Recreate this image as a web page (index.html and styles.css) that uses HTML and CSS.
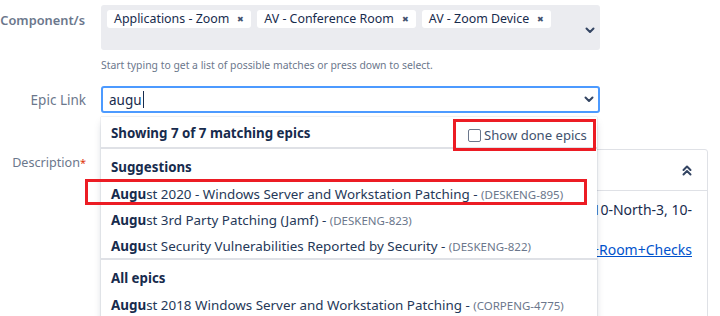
FILE: index.html
```html
<!DOCTYPE html>
<html lang="en">
<head>
    <meta charset="UTF-8">
    <meta name="viewport" content="width=device-width, initial-scale=1.0">
    <title>Edit Issue</title>
    <link rel="stylesheet" href="styles.css">
</head>
<body>
    <div class="form">
        <div class="row row-components">
            <label class="label label-strong">Component/s</label>
            <div class="field">
                <div class="multi">
                    <div class="tags">
                        <span class="tag">Applications - Zoom <span class="tag-x">&#x2716;</span></span>
                        <span class="tag">AV - Conference Room <span class="tag-x">&#x2716;</span></span>
                        <span class="tag">AV - Zoom Device <span class="tag-x">&#x2716;</span></span>
                    </div>
                    <svg class="chevron" width="10" height="7" viewBox="0 0 10 7">
                        <path d="M1.5 1.5 L5 5 L8.5 1.5" fill="none" stroke="#344563" stroke-width="2" stroke-linecap="round" stroke-linejoin="round"/>
                    </svg>
                </div>
                <div class="help">Start typing to get a list of possible matches or press down to select.</div>
            </div>
        </div>

        <div class="row row-epic">
            <label class="label">Epic Link</label>
            <div class="field picker">
                <div class="input">
                    <span class="typed">augu</span><span class="caret"></span>
                    <svg class="chevron" width="10" height="7" viewBox="0 0 10 7">
                        <path d="M1.5 1.5 L5 5 L8.5 1.5" fill="none" stroke="#344563" stroke-width="2" stroke-linecap="round" stroke-linejoin="round"/>
                    </svg>
                </div>

                <div class="dropdown">
                    <div class="dd-header">
                        <span class="dd-count">Showing 7 of 7 matching epics</span>
                        <label class="done-toggle">
                            <span class="checkbox"></span>Show done epics
                        </label>
                    </div>
                    <div class="group">
                        <div class="group-title">Suggestions</div>
                        <div class="item">
                            <b>Augu</b>st 2020 - Windows Server and Workstation Patching - <span class="key">(DESKENG-895)</span>
                            <span class="mark-box"></span>
                        </div>
                        <div class="item"><b>Augu</b>st 3rd Party Patching (Jamf) - <span class="key">(DESKENG-823)</span></div>
                        <div class="item"><b>Augu</b>st Security Vulnerabilities Reported by Security - <span class="key">(DESKENG-822)</span></div>
                    </div>
                    <div class="group">
                        <div class="group-title">All epics</div>
                        <div class="item"><b>Augu</b>st 2018 Windows Server and Workstation Patching - <span class="key">(CORPENG-4775)</span></div>
                    </div>
                </div>
            </div>
        </div>

        <div class="row row-description">
            <label class="label label-desc">Description<span class="req">*</span></label>
            <div class="field">
                <div class="editor">
                    <div class="toolbar">
                        <svg class="collapse" width="10" height="11" viewBox="0 0 10 11">
                            <path d="M1.5 5 L5 1.5 L8.5 5 M1.5 9.5 L5 6 L8.5 9.5" fill="none" stroke="#344563" stroke-width="2" stroke-linecap="round" stroke-linejoin="round"/>
                        </svg>
                    </div>
                    <div class="editor-body">
                        <p class="line line-right">Rooms: 10-North-1, 10-North-2, 10-North-3, 10-</p>
                        <p class="line">North-4</p>
                        <p class="line line-right"><a href="#">https://wiki/display/AV/Zoom+Room+Checks</a></p>
                    </div>
                </div>
            </div>
        </div>
    </div>
</body>
</html>
```

FILE: styles.css
```css
body {
    margin: 0;
    background: #fff;
    font-family: "Noto Sans", "Open Sans", sans-serif;
    font-size: 14px;
    color: #172b4d;
    overflow: hidden;
    height: 316px;
}

.form {
    padding-top: 5px;
}

.row {
    display: grid;
    grid-template-columns: 86px 499px;
    column-gap: 15px;
}

.label {
    text-align: right;
    color: #6b778c;
    font-size: 13.5px;
    line-height: 20px;
    white-space: nowrap;
}

.label-strong {
    font-weight: 600;
    font-size: 12.8px;
    padding-right: 1px;
}

.label-desc {
    font-size: 12.6px;
}

.row-components .label {
    padding-top: 5px;
}

/* multi select */
.multi {
    display: flex;
    justify-content: space-between;
    height: 45px;
    background: #ebecf0;
    border-radius: 3px;
    padding: 5px 5px 0 6px;
    box-sizing: border-box;
}

.tags {
    display: flex;
    gap: 6px;
    align-items: flex-start;
}

.tag {
    display: inline-flex;
    align-items: center;
    gap: 8px;
    height: 18px;
    padding: 0 7px;
    background: #fff;
    border-radius: 3px;
    font-size: 12.4px;
    line-height: 18px;
    white-space: nowrap;
}

.tag-x {
    font-size: 8px;
    color: #42526e;
}

.multi .chevron {
    margin-top: 17px;
}

.help {
    margin-top: 8px;
    font-size: 10.4px;
    line-height: 14px;
    color: #6b778c;
}

/* epic picker */
.row-epic {
    margin-top: 14px;
}

.row-epic .label {
    padding-top: 4px;
}

.picker {
    position: relative;
}

.input {
    display: flex;
    align-items: center;
    height: 27px;
    box-sizing: border-box;
    border: 2px solid #4c9aff;
    border-radius: 3px;
    padding: 0 4px 0 6px;
}

.typed {
    font-size: 13.5px;
}

.caret {
    width: 1px;
    height: 17px;
    background: #172b4d;
    margin-left: 1px;
}

.input .chevron {
    margin-left: auto;
}

.dropdown {
    position: absolute;
    top: 31px;
    left: 0;
    width: 496px;
    height: 230px;
    background: #fff;
    box-shadow: 0 4px 8px -2px rgba(9, 30, 66, 0.25), 0 0 1px rgba(9, 30, 66, 0.31);
    z-index: 10;
}

.dd-header {
    position: relative;
    display: flex;
    align-items: center;
    height: 32px;
    padding: 2px 10px 0;
    box-sizing: border-box;
    border-bottom: 2px solid #dfe1e6;
}

.dd-count {
    font-weight: 700;
    font-size: 13.3px;
}

.done-toggle {
    position: absolute;
    right: 1px;
    top: 2px;
    display: flex;
    align-items: center;
    gap: 3px;
    width: 143px;
    height: 32px;
    box-sizing: border-box;
    padding-left: 12px;
    border: 3px solid #ec1c24;
    color: #42526e;
    font-size: 13.1px;
    white-space: nowrap;
}

.checkbox {
    flex: none;
    width: 11px;
    height: 11px;
    border: 1px solid #6b778c;
    border-radius: 2px;
}

.group {
    padding-top: 1px;
}

.group + .group {
    border-top: 2px solid #dfe1e6;
}

.group-title {
    height: 30px;
    line-height: 34px;
    padding-left: 10px;
    font-weight: 700;
    font-size: 13.3px;
}

.item {
    position: relative;
    height: 26px;
    line-height: 28px;
    padding-left: 10px;
    font-size: 13.4px;
    white-space: nowrap;
    color: #253858;
}

.item b {
    color: #172b4d;
}

.key {
    font-size: 11.5px;
    color: #6b778c;
}

.mark-box {
    position: absolute;
    left: -16px;
    right: 10px;
    top: -1px;
    bottom: 1px;
    border: 3px solid #ec1c24;
}

/* description */
.row-description {
    margin-top: 36px;
    grid-template-columns: 86px 607px;
}

.row-description .label {
    padding-top: 4px;
}

.req {
    color: #de350b;
    font-size: 11px;
    vertical-align: top;
}

.editor {
    height: 200px;
    border: 1px solid #dfe1e6;
    border-radius: 3px;
}

.toolbar {
    display: flex;
    justify-content: flex-end;
    align-items: center;
    height: 40px;
    padding-right: 15px;
    border-bottom: 1px solid #dfe1e6;
}

.editor-body {
    padding: 9px 15px 0 10px;
}

.line {
    margin: 0;
    line-height: 20px;
    white-space: nowrap;
    font-size: 14px;
}

.line-right {
    text-align: right;
}

.line a {
    color: #0052cc;
}
```
